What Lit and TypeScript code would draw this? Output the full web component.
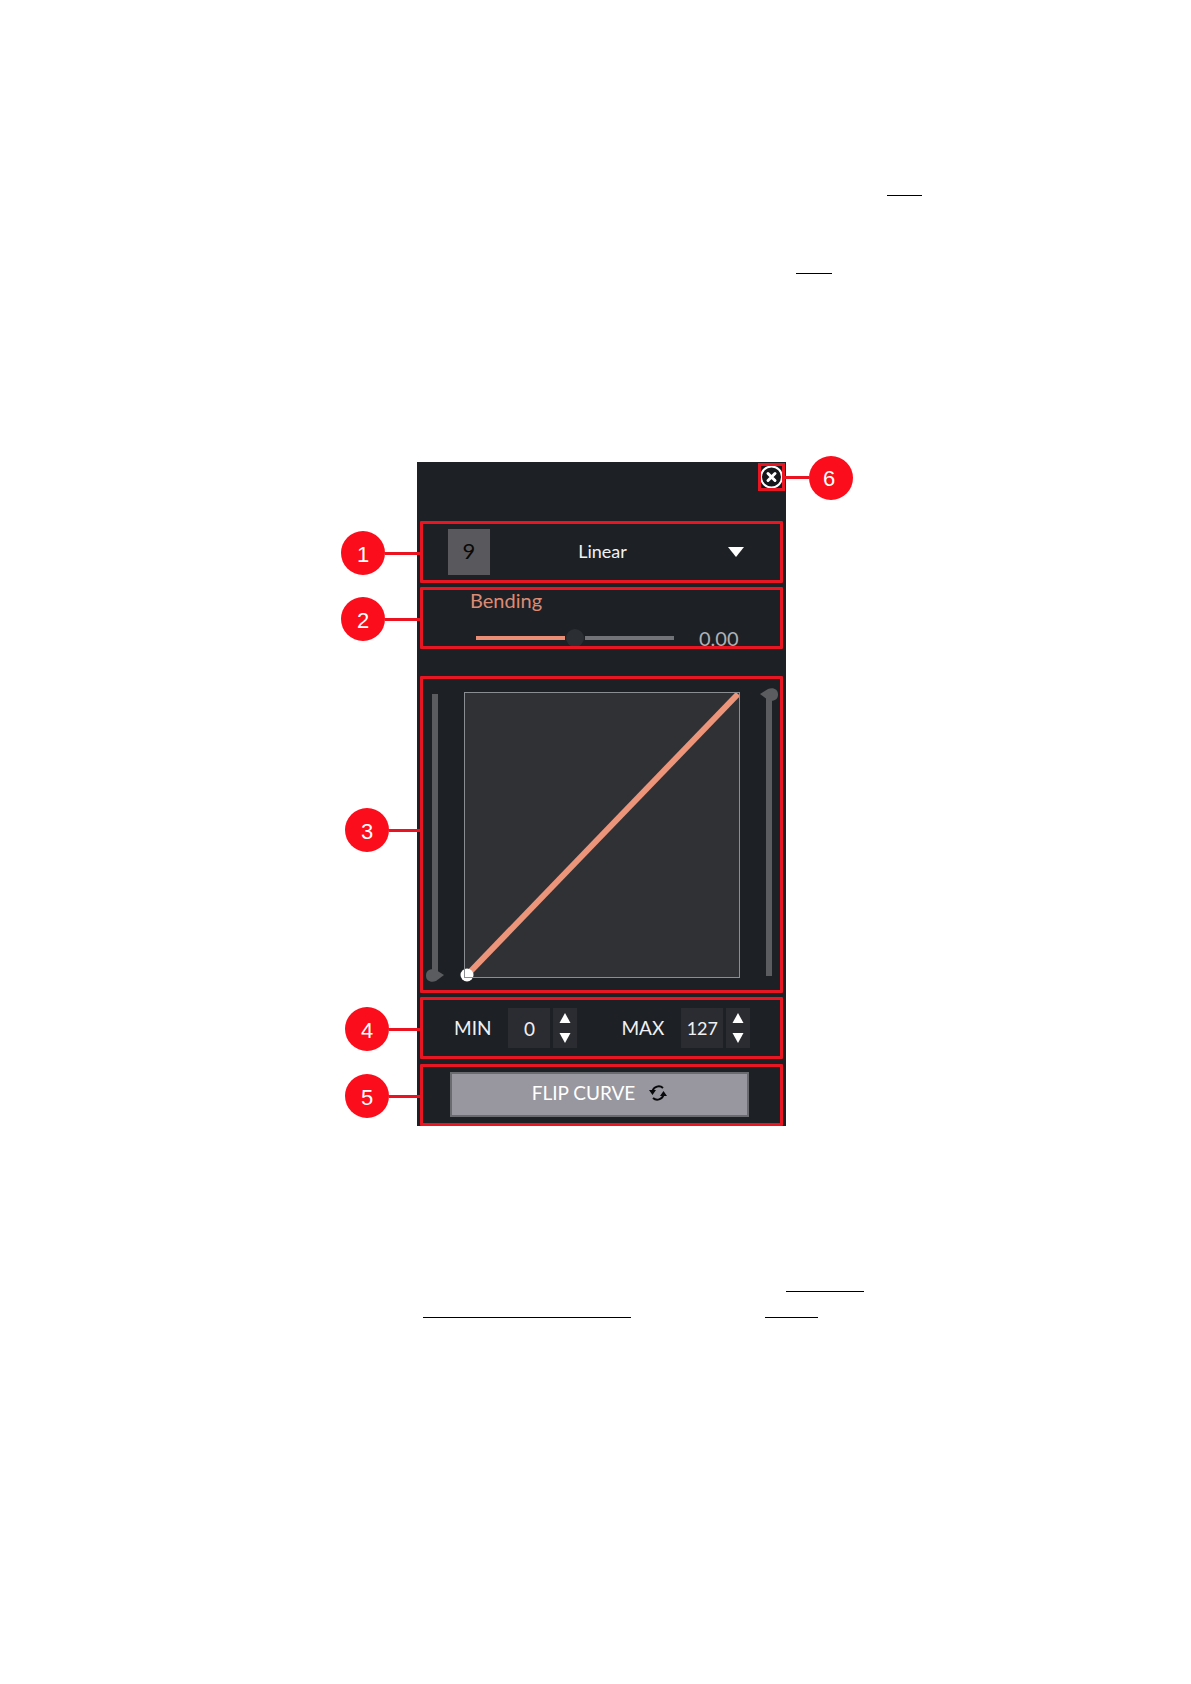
import { LitElement, html, css } from "lit";
import { customElement, property, state } from "lit/decorators.js";

@customElement("callout-badge")
class CalloutBadge extends LitElement {
  @property() label = "";

  static styles = css`
    :host {
      display: flex;
      align-items: center;
    }
    .disc {
      display: grid;
      place-items: center;
      width: 44px;
      height: 44px;
      border-radius: 50%;
      background: #fc0d1b;
      color: #fff;
      font: 500 22px/28px Inter, "Liberation Sans", sans-serif;
      font-family: "Liberation Sans", Arial, sans-serif;
      padding-top: 3px;
      box-sizing: border-box;
    }
    .line {
      width: var(--reach, 31px);
      height: 3px;
      background: #ec1320;
    }
    :host([flipped]) {
      flex-direction: row-reverse;
    }
    :host([flipped]) .disc {
      padding-right: 4px;
    }
  `;

  render() {
    return html`<span class="disc">${this.label}</span><span class="line"></span>`;
  }
}

@customElement("value-stepper")
class ValueStepper extends LitElement {
  @property() label = "";
  @property({ type: Number }) value = 0;

  static styles = css`
    :host {
      display: flex;
      align-items: center;
      gap: 3px;
      color: #f1f1f3;
      font: 19px/24px Lato, sans-serif;
    }
    .name {
      padding-right: 14px;
    }
    .field {
      box-sizing: border-box;
      width: 42px;
      height: 40px;
      padding: 0;
      border: 0;
      background: #2b2c31;
      color: inherit;
      font: inherit;
      text-align: center;
    }
    .field.long {
      font-size: 18px;
    }
    .arrows {
      display: flex;
      flex-direction: column;
      width: 24px;
      height: 40px;
      background: #2b2c31;
    }
    .arrow {
      flex: 1;
      display: grid;
      place-items: center;
      padding: 0;
      border: 0;
      background: none;
    }
    .arrow svg {
      display: block;
      fill: #fff;
    }
  `;

  private step(by: number) {
    this.value = Math.min(127, Math.max(0, this.value + by));
  }

  render() {
    const long = this.value > 99;
    return html`
      <label class="name" for="field">${this.label}</label>
      <input id="field" class="field ${long ? "long" : ""}" type="text" inputmode="numeric" .value=${String(this.value)} />
      <div class="arrows">
        <button class="arrow" aria-label="Increase" @click=${() => this.step(1)}>
          <svg width="12" height="10" viewBox="0 0 12 10"><path d="M6 0 11.500 10H.5z" /></svg>
        </button>
        <button class="arrow" aria-label="Decrease" @click=${() => this.step(-1)}>
          <svg width="12" height="10" viewBox="0 0 12 10"><path d="M6 10 .5 0h11z" /></svg>
        </button>
      </div>
    `;
  }
}

@customElement("app-root")
class AppRoot extends LitElement {
  @state() private flipped = false;

  static styles = css`
    :host {
      display: block;
      background: #fff;
      min-height: 100vh;
    }
    .page {
      display: flex;
      flex-direction: column;
      align-items: center;
      padding: 195px 0 80px 12px;
    }
    .rules {
      width: 100%;
      max-width: 369px;
      display: flex;
      flex-direction: column;
    }
    .rule {
      height: 1px;
      background: #000;
    }
    .rule.a {
      width: 35px;
      margin-left: 470px;
    }
    .rule.b {
      width: 36px;
      margin: 77px 0 0 379px;
    }
    .rule.c {
      width: 78px;
      margin-left: 369px;
    }
    .pair {
      display: flex;
      width: 395px;
      justify-content: space-between;
      margin: 25px 0 0 6px;
    }
    .rule.d {
      width: 208px;
    }
    .rule.e {
      width: 53px;
    }
    .panel {
      box-sizing: border-box;
      width: 100%;
      max-width: 369px;
      margin: 188px 0 165px;
      padding: 0 3px;
      background: #1d2025;
      color: #f1f1f3;
      font: 20px/24px Lato, sans-serif;
    }
    .head {
      display: flex;
      justify-content: flex-end;
      height: 58px;
      padding-top: 1px;
      margin-right: -2px;
    }
    .step {
      position: relative;
      margin-bottom: 4px;
    }
    .frame {
      box-sizing: border-box;
      min-height: 62px;
      border: 3px solid #e81522;
      border-radius: 1px;
      overflow: hidden;
    }
    .badge {
      position: absolute;
      right: 100%;
      top: 52%;
      transform: translateY(-50%);
    }
    .badge.far {
      --reach: 35px;
    }
    .badge.right {
      --reach: 24px;
      right: auto;
      left: 100%;
    }
    .close-step {
      position: relative;
      width: 27px;
      height: 28px;
    }
    .close {
      box-sizing: border-box;
      display: grid;
      place-items: center;
      width: 100%;
      height: 100%;
      padding: 0;
      border: 3px solid #e81522;
      background: #15171b;
      overflow: hidden;
    }
    .preset {
      display: flex;
      align-items: center;
      padding: 0 36px 0 25px;
    }
    .swatch {
      flex: none;
      display: grid;
      place-items: center;
      width: 42px;
      height: 46px;
      background: #59595d;
      color: #08090a;
      font-size: 22px;
      box-sizing: border-box;
      padding-bottom: 3px;
    }
    .picker {
      flex: 1;
      position: relative;
      display: flex;
      align-items: center;
    }
    .select {
      appearance: none;
      flex: 1;
      border: 0;
      background: none;
      color: inherit;
      font: 18px/24px Lato, sans-serif;
      padding: 0 29px 3px 0;
      text-align: center;
      text-align-last: center;
    }
    .caret {
      position: absolute;
      right: 0;
      pointer-events: none;
      fill: #fff;
    }
    .bend {
      height: 62px;
      padding-left: 47px;
    }
    .bend-name {
      display: block;
      height: 24px;
      line-height: 20px;
      color: #dd8b73;
    }
    .bend-row {
      display: flex;
      align-items: center;
      gap: 25px;
      height: 24px;
      padding: 12px 0 0 6px;
    }
    .bend-value {
      color: #b0b1b3;
    }
    input[type="range"] {
      appearance: none;
      margin: 0;
    }
    .slide {
      width: 198px;
      height: 20px;
      background: linear-gradient(90deg, #ea8f76 45%, #1d2025 45% 55%, #727378 55%) center / 100% 4px no-repeat;
    }
    .slide::-webkit-slider-thumb {
      appearance: none;
      width: 18px;
      height: 18px;
      border-radius: 50%;
      background: #2b2e32;
    }
    .curve-step {
      margin: 27px 0 4px;
    }
    .curve-step .badge {
      top: 154px;
    }
    .curve {
      display: flex;
      align-items: center;
      justify-content: space-between;
      padding: 9px 2px 8px 3px;
    }
    .level {
      writing-mode: vertical-lr;
      direction: rtl;
      width: 18px;
      height: 294px;
      background: linear-gradient(#5a5c60, #5a5c60) center / 6px calc(100% - 12px) no-repeat;
    }
    .level::-webkit-slider-thumb {
      appearance: none;
      width: 18px;
      height: 13px;
      background: #5a5c5f;
      clip-path: path("M18 6 10 1C5-1 0 1 0 6.500S5 14 10 12z");
    }
    .level.top::-webkit-slider-thumb {
      clip-path: path("M0 6 8 1C13-1 18 1 18 6.500S13 14 8 12z");
    }
    .graph {
      display: block;
      width: 276px;
      height: 286px;
      overflow: visible;
    }
    .range {
      display: flex;
      align-items: center;
      gap: 44px;
      padding-left: 31px;
    }
    .flip-step {
      margin: 5px 0 0;
    }
    .flip {
      padding: 5px 31px 6px 27px;
    }
    .flip-button {
      box-sizing: border-box;
      display: flex;
      align-items: center;
      justify-content: center;
      gap: 14px;
      width: 100%;
      height: 45px;
      padding: 0 0 4px 0;
      border: 2px solid #6a6b70;
      background: #98979f;
      color: #fff;
      font: 19px/24px Lato, sans-serif;
    }
  `;

  render() {
    const [y1, y2] = this.flipped ? [2, 283] : [283, 2];
    return html`
      <main class="page">
        <div class="rules">
          <span class="rule a"></span>
          <span class="rule b"></span>
        </div>

        <section class="panel">
          <div class="head">
            <div class="close-step">
              <button class="close" aria-label="Close">
                <svg width="21" height="22" viewBox="0 0 21 22" fill="none" stroke="#fff">
                  <circle cx="10.500" cy="11" r="10.500" stroke-width="2" />
                  <path d="M7 7.500l7 7m0-7l-7 7" stroke-width="3" stroke-linecap="round" />
                </svg>
              </button>
              <callout-badge class="badge right" label="6" flipped></callout-badge>
            </div>
          </div>

          <div class="step">
            <div class="frame preset">
              <span class="swatch">9</span>
              <div class="picker">
                <select class="select" aria-label="Curve type">
                  <option>Linear</option>
                </select>
                <svg class="caret" width="16" height="10" viewBox="0 0 16 10"><path d="M0 0h16L8 10z" /></svg>
              </div>
            </div>
            <callout-badge class="badge far" label="1"></callout-badge>
          </div>

          <div class="step">
            <div class="frame bend">
              <label class="bend-name" for="bending">Bending</label>
              <div class="bend-row">
                <input id="bending" class="slide" type="range" min="-1" max="1" step="0.01" value="0" />
                <output class="bend-value" for="bending">0.00</output>
              </div>
            </div>
            <callout-badge class="badge far" label="2"></callout-badge>
          </div>

          <div class="step curve-step">
            <div class="frame curve">
              <input class="level" type="range" min="0" max="127" value="0" aria-label="Minimum level" />
              <svg class="graph" viewBox="0 0 276 286" role="img" aria-label="Curve">
                <rect width="276" height="286" fill="#303134" />
                <line x1="3" y1=${y1} x2="274" y2=${y2} stroke="#ed957b" stroke-width="6" />
                <circle cx="3" cy=${y1} r="6.500" fill="#fff" />
                <rect x=".5" y=".5" width="275" height="285" fill="none" stroke="#8a8d92" />
              </svg>
              <input class="level top" type="range" min="0" max="127" value="127" aria-label="Maximum level" />
            </div>
            <callout-badge class="badge" label="3"></callout-badge>
          </div>

          <div class="step">
            <div class="frame range">
              <value-stepper label="MIN" .value=${0}></value-stepper>
              <value-stepper label="MAX" .value=${127}></value-stepper>
            </div>
            <callout-badge class="badge" label="4"></callout-badge>
          </div>

          <div class="step flip-step">
            <div class="frame flip">
              <button class="flip-button" @click=${() => (this.flipped = !this.flipped)}>
                FLIP CURVE
                <svg width="18" height="18" viewBox="0 0 18 18" fill="none" stroke="#08090a" stroke-width="2">
                  <path d="M3.500 7A6.500 6.500 0 0 1 14 4M14.500 11A6.500 6.500 0 0 1 4 14" />
                  <path d="M0 6h7L3.500 11zM11 12h7L14.500 7z" fill="#08090a" stroke="none" />
                </svg>
              </button>
            </div>
            <callout-badge class="badge" label="5"></callout-badge>
          </div>
        </section>

        <div class="rules">
          <span class="rule c"></span>
          <div class="pair">
            <span class="rule d"></span>
            <span class="rule e"></span>
          </div>
        </div>
      </main>
    `;
  }
}
